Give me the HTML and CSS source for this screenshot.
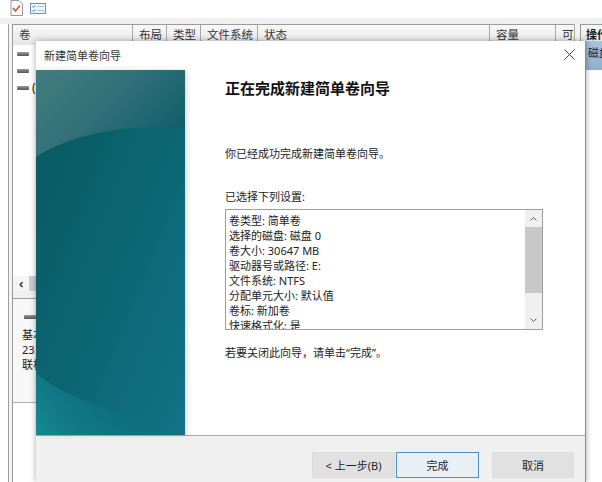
FILE: index.html
```html
<!DOCTYPE html>
<html lang="zh-CN">
<head>
<meta charset="utf-8">
<title>新建简单卷向导</title>
<link rel="stylesheet" href="styles.css">
</head>
<body>
<div class="app">
  <div class="toolbar">
    <svg class="tool-doc" viewBox="0 0 13 16" width="13" height="16"><path d="M1 .5h8l3.500 3.500v11.500h-11.500z" fill="#fff" stroke="#9a9a9a"/><path d="M3 8l2.500 3 4.500-5.500" fill="none" stroke="#d8552c" stroke-width="1.600"/></svg>
    <svg class="tool-list" viewBox="0 0 16 11" width="16" height="11"><rect x=".5" y=".5" width="15" height="10" fill="#eef4fa" stroke="#6f93b5"/><path d="M2.500 3.500l1 1 1.500-2M2.500 7.500l1 1 1.500-2" fill="none" stroke="#3f78b0"/><path d="M7 3.500h7M7 7.500h7" stroke="#b5c2ce"/></svg>
  </div>
  <div class="strip"></div>
  <div class="main">
    <div class="nav"></div>
    <div class="center">
      <div class="table-head">
        <span class="col col-vol">卷</span>
        <span class="col col-layout">布局</span>
        <span class="col col-type">类型</span>
        <span class="col col-fs">文件系统</span>
        <span class="col col-status">状态</span>
        <span class="col col-size">容量</span>
        <span class="col col-free">可</span>
      </div>
      <div class="table-body">
        <div class="vol-row"><i class="disk"></i></div>
        <div class="vol-row"><i class="disk"></i></div>
        <div class="vol-row"><i class="disk"></i><span>(</span></div>
      </div>
      <div class="hscroll"><span class="arrow">‹</span><span class="thumb"></span></div>
      <div class="disk-pane">
        <i class="disk disk-wide"></i>
        <div>基本</div>
        <div>23</div>
        <div>联机</div>
      </div>
      <div class="pane-rest"></div>
    </div>
    <div class="actions">
      <div class="actions-head">操作</div>
      <div class="actions-row">磁盘</div>
    </div>
  </div>
</div>

<div class="dialog">
  <div class="dialog-title">
    <span>新建简单卷向导</span>
    <svg class="close" viewBox="0 0 11 11" width="11" height="11"><path d="M.5.500l10 10M10.500.500l-10 10" stroke="#444" fill="none"/></svg>
  </div>
  <div class="dialog-body">
    <svg class="banner" viewBox="0 0 149 365" width="149" height="365" preserveAspectRatio="none">
      <defs>
        <linearGradient id="base" x1="0" y1="0" x2="1" y2="1">
          <stop offset="0" stop-color="#07585f"/>
          <stop offset=".5" stop-color="#0b6570"/>
          <stop offset="1" stop-color="#137288"/>
        </linearGradient>
        <linearGradient id="gloss" x1="0" y1="0" x2="1" y2=".6">
          <stop offset="0" stop-color="#427c7d"/>
          <stop offset=".5" stop-color="#33717a"/>
          <stop offset="1" stop-color="#125f69"/>
        </linearGradient>
        <linearGradient id="glow" gradientUnits="userSpaceOnUse" x1="0" y1="365" x2="80" y2="310">
          <stop offset="0" stop-color="#178a91"/>
          <stop offset=".6" stop-color="#127c8b" stop-opacity=".5"/>
          <stop offset="1" stop-color="#127c8b" stop-opacity="0"/>
        </linearGradient>
      </defs>
      <rect width="149" height="365" fill="url(#base)"/>
      <path d="M0 0H149V58C90 55 40 62 0 87Z" fill="url(#gloss)"/>
      <path d="M0 303C20 320 50 335 149 365H0Z" fill="url(#glow)"/>
    </svg>
    <div class="content">
      <h1>正在完成新建简单卷向导</h1>
      <p class="done">你已经成功完成新建简单卷向导。</p>
      <p class="selected">已选择下列设置:</p>
      <div class="summary">
        <div class="summary-text">
          <div>卷类型: 简单卷</div>
          <div>选择的磁盘: 磁盘 0</div>
          <div>卷大小: 30647 MB</div>
          <div>驱动器号或路径: E:</div>
          <div>文件系统: NTFS</div>
          <div>分配单元大小: 默认值</div>
          <div>卷标: 新加卷</div>
          <div>快速格式化: 是</div>
        </div>
        <div class="vscroll">
          <svg viewBox="0 0 7 4" width="7" height="4"><path d="M.5 3.500l3-3 3 3" fill="none" stroke="#606060"/></svg>
          <span class="vthumb"></span>
          <svg viewBox="0 0 7 4" width="7" height="4"><path d="M.5.500l3 3 3-3" fill="none" stroke="#606060"/></svg>
        </div>
      </div>
      <p class="hint">若要关闭此向导，请单击“完成”。</p>
    </div>
  </div>
  <div class="footer">
    <button class="btn">&lt; 上一步(B)</button>
    <button class="btn btn-primary">完成</button>
    <button class="btn btn-cancel">取消</button>
  </div>
</div>
</body>
</html>
```
FILE: styles.css
```css
* { box-sizing: border-box; }
html, body { margin: 0; height: 100%; }
body {
  width: 602px;
  height: 482px;
  overflow: hidden;
  position: relative;
  background: #fff;
  color: #222;
  font: 11px/15px "Noto Sans", "Noto Sans CJK SC", sans-serif;
}
.app { display: flex; flex-direction: column; height: 482px; }
.toolbar { height: 18px; display: flex; align-items: flex-start; padding: 0 0 0 10px; gap: 7px; background: #fff; }
.tool-list { margin-top: 3px; }
.strip { height: 6px; background: #f0f0f0; }
.main { flex: 1; display: flex; min-height: 0; background: #f3f3f3; }
.nav { width: 9px; flex: none; background: #fff; border-right: 1px solid #a0a0a0; }
.center { width: 563px; flex: none; margin-left: 3px; display: flex; flex-direction: column; background: #fff; border-left: 1px solid #9a9a9a; border-top: 1px solid #9a9a9a; border-right: 1px solid #a8a8a8; }
.table-head { height: 20px; flex: none; display: flex; background: linear-gradient(#f8f8f8, #e6e6e6); color: #333; font-size: 11.500px; line-height: 20px; }
.col { padding-left: 6px; border-right: 1px solid #a8a8a8; flex: none; white-space: nowrap; overflow: hidden; }
.col-vol { width: 120px; }
.col-layout { width: 34px; }
.col-type { width: 34px; }
.col-fs { width: 57px; }
.col-status { width: 232px; }
.col-size { width: 66px; }
.col-free { width: 18px; border-right: 0; }
.table-body { height: 231px; flex: none; }
.vol-row { height: 17px; display: flex; align-items: center; gap: 3px; padding-left: 4px; font-size: 12px; }
.disk { display: block; width: 12px; height: 4px; background: linear-gradient(#9a9a9a, #555); border-radius: 1px; }
.disk-wide { margin: 0 0 8px 2px; }
.hscroll { height: 22px; flex: none; display: flex; align-items: flex-start; background: #f0f0f0; }
.arrow { width: 16px; height: 15px; text-align: center; color: #444; font-size: 13px; font-weight: 700; background: #f5f5f5; }
.thumb { width: 30px; height: 15px; background: #cdcdcd; }
.disk-pane { height: 105px; flex: none; padding: 16px 0 0 9px; border-top: 1px solid #9a9a9a; border-bottom: 1px solid #b0b0b0; background: #f7f7f7; }
.pane-rest { flex: 1; background: #fff; }
.actions { flex: none; width: 22px; margin-left: 5px; display: flex; flex-direction: column; border-left: 1px solid #9a9a9a; border-top: 1px solid #9a9a9a; background: #fff; }
.actions-head { height: 16px; flex: none; padding-left: 5px; line-height: 20px; font-weight: 700; background: linear-gradient(#f8f8f8, #e6e6e6); white-space: nowrap; overflow: hidden; }
.actions-row { height: 29px; flex: none; padding: 4px 0 0 7px; background: linear-gradient(#a9c1dc, #92aece); white-space: nowrap; overflow: hidden; }

.dialog {
  position: absolute;
  left: 36px;
  top: 41px;
  width: 550px;
  height: 441px;
  display: flex;
  flex-direction: column;
  background: #fff;
  border-right: 1px solid #8c8c8c;
  box-shadow: 0 0 6px rgba(0, 0, 0, .35);
}
.dialog-title { height: 29px; flex: none; display: flex; align-items: center; justify-content: space-between; padding: 0 10px 0 8px; color: #333; }
.close { margin-top: -2px; }
.dialog-body { flex: 1; display: flex; min-height: 0; }
.banner {
  width: 149px;
  height: 365px;
  flex: none;
  display: block;
  filter: drop-shadow(2px 0 2px rgba(0, 0, 0, .15));
}
.content { flex: 1; padding: 0 0 0 40px; color: #222; }
.content h1 { margin: 7px 0 0; font-size: 15px; line-height: 22px; font-weight: 700; color: #111; }
.content p { margin: 0; }
.done { padding-top: 47px; }
.selected { padding-top: 28px; }
.summary { margin-top: 5px; width: 318px; height: 121px; display: flex; border: 1px solid #9e9e9e; overflow: hidden; }
.summary-text { flex: 1; padding: 3px 0 0 3px; white-space: nowrap; overflow: hidden; }
.vscroll { width: 17px; flex: none; display: flex; flex-direction: column; align-items: center; justify-content: space-between; padding: 7px 0; background: #f0f0f0; position: relative; }
.vthumb { position: absolute; left: 0; right: 0; top: 17px; height: 66px; background: #c8c8c8; }
.hint { padding-top: 15px; }
.footer { height: 47px; flex: none; display: flex; align-items: flex-start; padding: 16px 0 0 276px; background: #f0f0f0; border-top: 1px solid #a8a8a8; }
.btn { width: 83px; height: 26px; padding: 0; border: 1px solid #dcdcdc; background: #e1e1e1; color: #222; font: inherit; }
.btn-primary { margin-left: 1px; background: #e8eff5; border: 1px solid #4d8fc4; }
.btn-cancel { margin-left: 13px; width: 82px; }
```
